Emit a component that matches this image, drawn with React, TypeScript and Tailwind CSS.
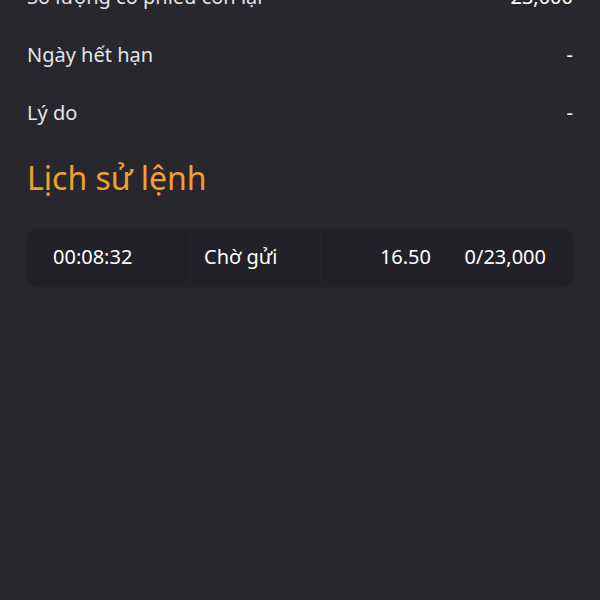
import React from "react";

export default function App() {
  const rows = [
    { label: "Số lượng cổ phiếu còn lại", value: "23,000" },
    { label: "Ngày hết hạn", value: "-" },
    { label: "Lý do", value: "-" },
  ];
  return (
    <div
      className="w-[600px] h-[600px] overflow-hidden bg-[#28272d] text-[#ececee]"
      style={{ fontFamily: '"Noto Sans", "Open Sans", sans-serif' }}
    >
      <div className="-mt-[32px] px-[27px]">
        {rows.map((r) => (
          <div key={r.label} className="flex h-[58px] items-center justify-between text-[20px]">
            <span className="text-[#e4e4e6]">{r.label}</span>
            <span className="text-white">{r.value}</span>
          </div>
        ))}
        <div className="mt-[14px] flex h-[44px] items-center text-[32px] leading-none text-[#f0a032]">
          Lịch sử lệnh
        </div>
        <div className="mt-[29px] flex h-[56px] items-center rounded-[10px] bg-[#222127] text-[20px] text-white shadow-[0_1px_3px_rgba(0,0,0,0.25)]">
          <div className="flex h-full w-[164px] items-center border-r border-[#27262c] pl-[26px]">00:08:32</div>
          <div className="flex h-full w-[130px] items-center border-r border-[#27262c] pl-[13px]">Chờ gửi</div>
          <div className="flex h-full w-[128px] items-center justify-end pr-[18px]">16.50</div>
          <div className="flex h-full flex-1 items-center justify-end pr-[27px]">0/23,000</div>
        </div>
      </div>
    </div>
  );
}
